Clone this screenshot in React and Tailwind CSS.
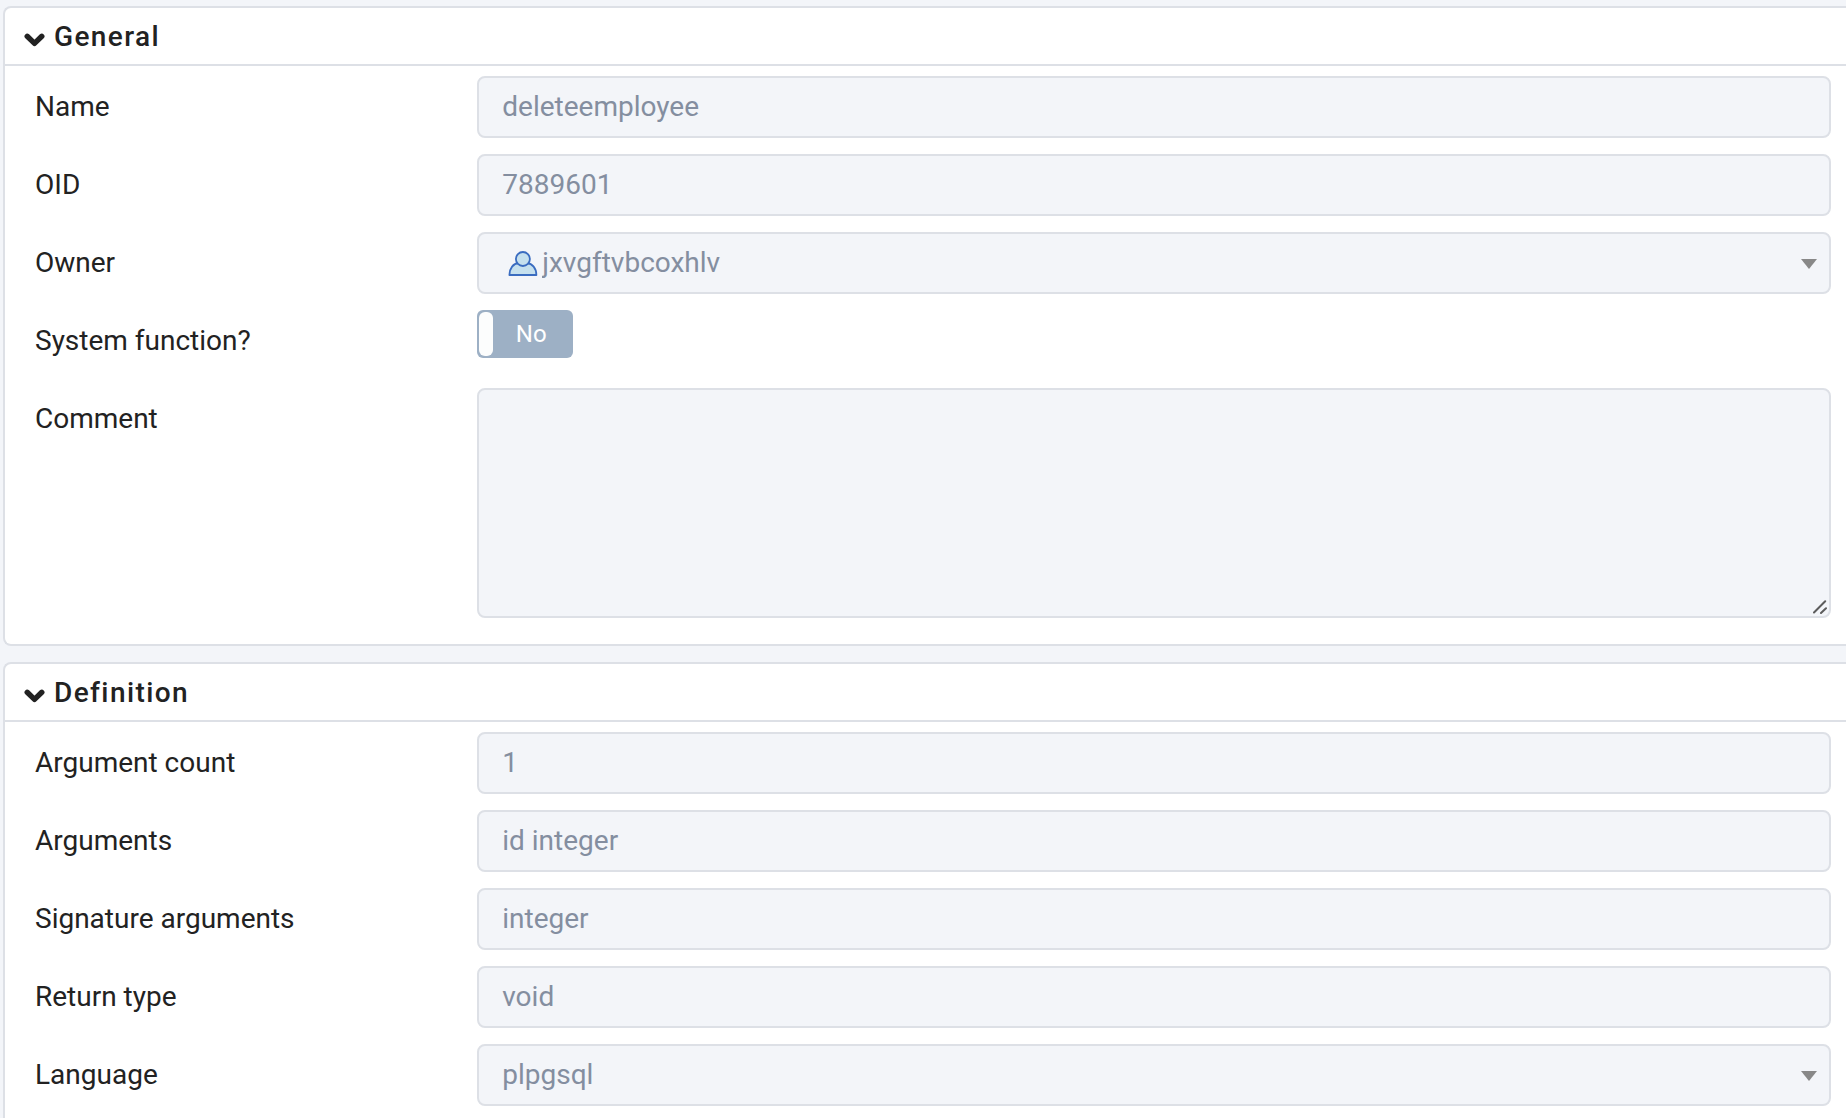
import { useState } from 'react';

const GENERAL_FIELDS = [
  { id: 'name', label: 'Name', type: 'text', value: 'deleteemployee' },
  { id: 'oid', label: 'OID', type: 'text', value: '7889601' },
  { id: 'owner', label: 'Owner', type: 'select', value: 'jxvgftvbcoxhlv', icon: true },
  { id: 'system', label: 'System function?', type: 'switch', value: false },
  { id: 'comment', label: 'Comment', type: 'textarea', value: '' },
];

const DEFINITION_FIELDS = [
  { id: 'argcount', label: 'Argument count', type: 'text', value: '1' },
  { id: 'args', label: 'Arguments', type: 'text', value: 'id integer' },
  { id: 'sigargs', label: 'Signature arguments', type: 'text', value: 'integer' },
  { id: 'rettype', label: 'Return type', type: 'text', value: 'void' },
  { id: 'language', label: 'Language', type: 'select', value: 'plpgsql' },
];

const controlClass =
  'block w-full rounded-lg border-2 border-[#dde0e6] bg-[#f3f5f9] text-[28px] text-[#848ea0]';

function ChevronIcon() {
  return (
    <svg
      className="mt-1.5 h-3.5 w-[21px]"
      viewBox="0 0 21 14"
      fill="none"
      stroke="currentColor"
      strokeWidth="5.4"
      strokeLinecap="round"
      strokeLinejoin="round"
    >
      <path d="M3.2 3.3L10.5 10.4L17.8 3.3" />
    </svg>
  );
}

function RoleIcon() {
  return (
    <svg
      className="pointer-events-none absolute left-[31px] top-[19px] h-[26px] w-[30px]"
      viewBox="0 0 30 26"
      fill="#c5e0ee"
      stroke="#3a6cc0"
      strokeWidth="1.8"
      strokeLinejoin="round"
    >
      <path d="M1.4 24 C1.4 17.2 5.5 12.4 10.5 12 L19 12 C24.2 12.6 28.4 17.2 28.4 24 Z" />
      <circle cx="14.9" cy="8" r="7" />
    </svg>
  );
}

function SelectControl({ field }) {
  return (
    <div className="relative">
      <select
        id={field.id}
        disabled
        className={`${controlClass} h-[62px] appearance-none pr-6 disabled:opacity-100 ${
          field.icon ? 'pl-[63px]' : 'pl-[23px]'
        }`}
      >
        <option>{field.value}</option>
      </select>
      {field.icon && <RoleIcon />}
      <svg
        className="pointer-events-none absolute right-3.5 top-[27px] h-2.5 w-4"
        viewBox="0 0 16 10"
        fill="#888888"
      >
        <path d="M0 0H16L8 10Z" />
      </svg>
    </div>
  );
}

function CommentControl({ field }) {
  return (
    <div className="relative">
      <textarea
        id={field.id}
        disabled
        defaultValue={field.value}
        className={`${controlClass} h-[230px] resize-none px-[23px] py-3`}
      />
      <svg
        className="pointer-events-none absolute bottom-1 right-1 h-3.5 w-3.5"
        viewBox="0 0 14 14"
        fill="none"
        stroke="#5c5c5c"
        strokeWidth="2"
        strokeLinecap="round"
      >
        <path d="M1 12.5L12.2 1.2M8 13L13 8.2" />
      </svg>
    </div>
  );
}

function Control({ field }) {
  if (field.type === 'select') return <SelectControl field={field} />;
  if (field.type === 'textarea') return <CommentControl field={field} />;
  if (field.type === 'switch') {
    return (
      <div className="h-[62px]">
        <button
          id={field.id}
          type="button"
          role="switch"
          aria-checked={field.value}
          disabled
          className="flex h-12 w-24 rounded-md bg-[#9db0c5] p-0.5 text-2xl text-white"
        >
          <span className="h-11 w-3.5 rounded-md bg-[#fcfdfd]" />
          <span className="flex h-11 flex-1 items-center justify-center pr-0.5">No</span>
        </button>
      </div>
    );
  }
  return (
    <input
      id={field.id}
      type="text"
      disabled
      defaultValue={field.value}
      className={`${controlClass} h-[62px] px-[23px] pb-0.5`}
    />
  );
}

function Panel({ title, fields }) {
  const [open, setOpen] = useState(true);

  return (
    <section className="rounded-l-lg border-2 border-r-0 border-[#dde0e6] bg-white">
      <h2 className={open ? 'border-b-2 border-[#dde0e6]' : ''}>
        <button
          type="button"
          aria-expanded={open}
          onClick={() => setOpen(!open)}
          className="flex h-14 w-full items-center gap-[9px] pl-[19px] pt-0.5 text-[28px] font-medium tracking-wider"
        >
          <ChevronIcon />
          {title}
        </button>
      </h2>

      {open && (
        <div className="flex flex-col gap-4 pb-[26px] pt-2.5">
          {fields.map((field) => (
            <div key={field.id} className="grid grid-cols-4">
              <label htmlFor={field.id} className="pl-[30px] text-[28px] leading-[62px]">
                {field.label}
              </label>
              <div className="col-span-3 pl-3 pr-[15px]">
                <Control field={field} />
              </div>
            </div>
          ))}
        </div>
      )}
    </section>
  );
}

export default function App() {
  return (
    <main className="flex min-h-screen flex-col gap-4 bg-[#f3f5f9] pl-[3px] pt-1.5 font-['Roboto',sans-serif] text-[#222222]">
      <Panel title="General" fields={GENERAL_FIELDS} />
      <Panel title="Definition" fields={DEFINITION_FIELDS} />
    </main>
  );
}
